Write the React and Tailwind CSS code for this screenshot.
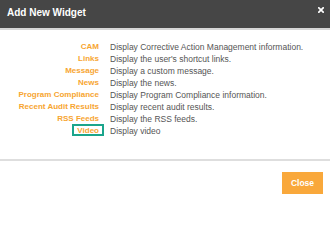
const WIDGETS = [
  { name: "CAM", text: "Display Corrective Action Management information." },
  { name: "Links", text: "Display the user's shortcut links." },
  { name: "Message", text: "Display a custom message." },
  { name: "News", text: "Display the news." },
  { name: "Program Compliance", text: "Display Program Compliance information." },
  { name: "Recent Audit Results", text: "Display recent audit results." },
  { name: "RSS Feeds", text: "Display the RSS feeds." },
  { name: "Video", text: "Display video", focused: true },
];

export default function App() {
  return (
    <div className="w-[330px] h-[204px] bg-white flex flex-col font-['Liberation_Sans',Arial,sans-serif] overflow-hidden">
      {/* Header */}
      <div className="h-[28px] bg-[#464646] flex justify-between items-start">
        <h1 className="pl-[7px] pt-[8px] text-[10px] leading-[10px] font-bold text-white">
          Add New Widget
        </h1>
        <svg width="6" height="6" viewBox="0 0 6 6" className="mt-[7px] mr-[6px]">
          <path d="M0.8 0.8L5.2 5.2M5.2 0.8L0.8 5.2" stroke="#fff" strokeWidth="1.7" strokeLinecap="square" />
        </svg>
      </div>
      <div className="h-[2px] bg-[#d6d6d6]" />

      {/* Widget list */}
      <div className="flex-1 pt-[11px]">
        <div className="grid grid-cols-[99px_1fr] gap-x-[11px]">
          {WIDGETS.map((w) => (
            <div key={w.name} className="contents">
              <div className="text-right text-[8px] leading-[12px] font-bold text-[#f7a531] whitespace-nowrap">
                {w.focused ? (
                  <span className="relative">
                    {w.name}
                    <span className="absolute -left-[5px] -right-[5px] -top-[2px] -bottom-[0.5px] border-2 border-[#1ba58c]" />
                  </span>
                ) : (
                  w.name
                )}
              </div>
              <div className="text-[8.5px] leading-[12px] text-[#555555] whitespace-nowrap">{w.text}</div>
            </div>
          ))}
        </div>
      </div>

      <div className="h-[2px] bg-[#dedede]" />
      {/* Footer */}
      <div className="h-[43px] flex justify-end pt-[11px] pr-[7px]">
        <button className="w-[41px] h-[22px] bg-[#f9a83b] text-white text-[8.5px] font-bold">
          Close
        </button>
      </div>
    </div>
  );
}
